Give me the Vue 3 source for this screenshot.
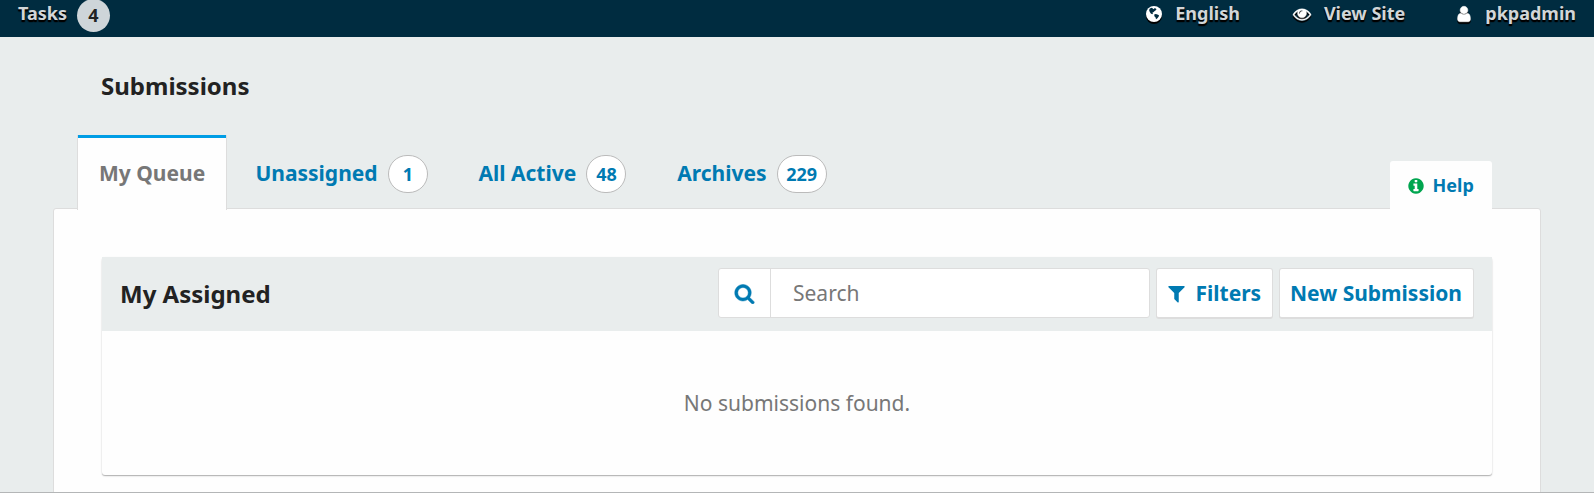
<script setup>
const tabs = [
  { label: 'My Queue', active: true },
  { label: 'Unassigned', count: 1 },
  { label: 'All Active', count: 48 },
  { label: 'Archives', count: 229 },
]
</script>

<template>
  <div class="page">
    <header class="topbar">
      <a class="tasks">Tasks</a>
      <span class="tasks-count">4</span>
      <nav class="user-nav">
        <a class="nav-item language">
          <svg viewBox="0 0 18 18">
            <circle cx="9" cy="9" r="8" fill="#fff" />
            <path d="M4.4 4L6.2 2.8 7.6 3.2 8.4 4.2 9.4 3.2 11 3.6 11.4 4.8 10.4 5.6 9.4 6.2 8.4 7.2 7.4 7.6 8 8.6 7.2 9.2 5.8 8.4 4.8 7 4.2 5.6z" fill="#002c40" />
            <path d="M9.2 9.6L10.8 9 12.4 9.4 14 10.2 13.6 11.8 12.4 13.2 11 14.2 10.6 12.4 9.4 11.2z" fill="#002c40" />
          </svg>
          <span>English</span>
        </a>
        <a class="nav-item view-site">
          <svg viewBox="0 0 1792 1792"><path fill="#fff" stroke="#fff" stroke-width="40" d="M1664 960q-152-236-381-353 61 104 61 225 0 185-131.5 316.5t-316.5 131.5-316.5-131.5-131.5-316.5q0-121 61-225-229 117-381 353 133 205 333.5 326.5t434.5 121.5 434.5-121.5 333.5-326.5zm-720-384q0-20-14-34t-34-14q-125 0-214.5 89.5t-89.5 214.5q0 20 14 34t34 14 34-14 14-34q0-86 61-147t147-61q20 0 34-14t14-34zm848 384q0 34-20 69-140 230-376.5 368.5t-499.5 138.5-499.5-139-376.5-368q-20-35-20-69t20-69q140-229 376.5-368t499.5-139 499.5 139 376.5 368q20 35 20 69z" /></svg>
          <span>View Site</span>
        </a>
        <a class="nav-item account">
          <svg viewBox="0 0 1792 1792"><path fill="#fff" stroke="#fff" stroke-width="50" d="M1536 1399q0 109-62.5 187t-150.5 78h-854q-88 0-150.5-78t-62.5-187q0-85 8.5-160.5t31.5-152 58.5-131 94-89 134.5-34.5q131 128 313 128t313-128q76 0 134.5 34.5t94 89 58.5 131 31.5 152 8.5 160.5zm-256-887q0 159-112.5 271.5t-271.5 112.5-271.5-112.5-112.5-271.5 112.5-271.5 271.5-112.5 271.5 112.5 112.5 271.5z" /></svg>
          <span>pkpadmin</span>
        </a>
      </nav>
    </header>

    <h1 class="title">Submissions</h1>

    <div class="tab-row">
      <a v-for="tab in tabs" :key="tab.label" class="tab" :class="{ active: tab.active }">
        {{ tab.label }}<span v-if="tab.count" class="count">{{ tab.count }}</span>
      </a>
      <a class="help">
        <svg viewBox="0 0 1792 1792"><path fill="#00a54f" d="M1152 1376v-160q0-14-9-23t-23-9h-96v-512q0-14-9-23t-23-9h-320q-14 0-23 9t-9 23v160q0 14 9 23t23 9h96v320h-96q-14 0-23 9t-9 23v160q0 14 9 23t23 9h448q14 0 23-9t9-23zm-128-896v-160q0-14-9-23t-23-9h-192q-14 0-23 9t-9 23v160q0 14 9 23t23 9h192q14 0 23-9t9-23zm640 416q0 209-103 385.5t-279.5 279.5-385.5 103-385.5-103-279.5-279.5-103-385.5 103-385.5 279.5-279.5 385.5-103 385.5 103 279.5 279.5 103 385.5z" /></svg>
        Help
      </a>
    </div>

    <main class="panel">
      <section class="list">
        <div class="list-head">
          <h2>My Assigned</h2>
          <div class="search">
            <span class="search-icon">
              <svg viewBox="0 0 1792 1792"><path fill="#007ab2" stroke="#007ab2" stroke-width="40" d="M1216 832q0-185-131.5-316.5t-316.5-131.5-316.5 131.5-131.5 316.5 131.5 316.5 316.5 131.5 316.5-131.5 131.5-316.5zm512 832q0 52-38 90t-90 38q-54 0-90-38l-343-342q-179 124-399 124-143 0-273.5-55.5t-225-150-150-225-55.5-273.5 55.5-273.5 150-225 225-150 273.5-55.5 273.5 55.5 225 150 150 225 55.5 273.5q0 220-124 399l343 343q37 37 37 90z" /></svg>
            </span>
            <span class="search-field">Search</span>
          </div>
          <button class="btn filters">
            <svg viewBox="0 0 1792 1792"><path fill="#007ab2" d="M1595 295q17 41-14 70l-493 493v742q0 42-39 59-13 5-25 5-27 0-45-19l-256-256q-19-19-19-45v-486l-493-493q-31-29-14-70 17-39 59-39h1280q42 0 59 39z" /></svg>
            <span>Filters</span>
          </button>
          <button class="btn new">New Submission</button>
        </div>
        <p class="empty">No submissions found.</p>
      </section>
    </main>
  </div>
</template>

<style>
body { background: #e9eded; }
</style>

<style scoped>
.page {
  box-sizing: border-box;
  width: 1594px;
  height: 493px;
  overflow: hidden;
  display: flex;
  flex-direction: column;
  background: #e9eded;
  border-bottom: 1px solid #b4b6b7;
  font-family: "Noto Sans", sans-serif;
  font-size: 21px;
  color: #222;
}
.topbar {
  flex: none;
  height: 37px;
  display: flex;
  align-items: flex-start;
  background: #002c40;
  font-size: 18px;
  font-weight: 700;
  line-height: 27px;
  color: #d2d6d8;
}
.tasks {
  width: 59px;
  padding-left: 18px;
  text-shadow: 0 2px 1px #000, 0 2px 1px #000;
}
.tasks-count {
  width: 33px;
  height: 33px;
  margin-top: -1px;
  border-radius: 50%;
  background: #ced5d9;
  color: #222;
  line-height: 33px;
  text-align: center;
}
.user-nav { display: flex; margin-left: auto; padding-right: 18px; }
.nav-item { display: flex; text-shadow: 0 2px 1px #000, 0 2px 1px #000; }
.view-site { margin-left: 53px; }
.account { margin-left: 50px; }
.nav-item svg {
  width: 18px;
  height: 18px;
  margin: 5px 12px 0 0;
  overflow: visible;
  filter: drop-shadow(0 2px 0.5px #000);
}
.nav-item.view-site svg { margin-right: 13px; }
.title {
  flex: none;
  margin: 31px 0 0 101px;
  font-size: 24px;
  line-height: 36px;
  height: 67px;
}
.tab-row {
  flex: none;
  position: relative;
  z-index: 1;
  height: 75px;
  margin: 0 102px 0 77px;
  display: flex;
}
.tab {
  height: 75px;
  display: flex;
  font-weight: 700;
  line-height: 76px;
  color: #007ab2;
  white-space: nowrap;
  padding: 0 22.3px 0 28.4px;
}
.tab.active {
  box-sizing: border-box;
  width: 150px;
  padding: 0 0 0 21px;
  border: solid #ddd;
  border-width: 0 1px;
  background: linear-gradient(#009de5 3px, #fefefe 3px);
  color: #777;
}
.count {
  box-sizing: border-box;
  height: 38px;
  min-width: 40px;
  margin: 20px 0 0 10.2px;
  padding: 0 8.5px;
  border: 1px solid #bbb;
  border-radius: 19px;
  background: #fff;
  font-size: 18px;
  line-height: 36px;
  text-align: center;
}
.help {
  box-sizing: border-box;
  align-self: flex-end;
  display: flex;
  align-items: center;
  width: 102px;
  height: 49px;
  margin-left: auto;
  padding-left: 17px;
  border-radius: 3px 3px 0 0;
  background: #fefefe;
  color: #007ab2;
  font-size: 18px;
  font-weight: 700;
  line-height: 49px;
}
.help svg { width: 18px; height: 18px; margin-right: 7.5px; }
.panel {
  box-sizing: border-box;
  flex: none;
  width: 1488px;
  height: 320px;
  margin: -2px 0 0 53px;
  padding: 48px 47px 0;
  border: 1px solid #ddd;
  border-radius: 3px;
  background: #fefefe;
}
.list {
  height: 218px;
  margin: 0 1px;
  border-radius: 3px;
  background: #fefefe;
  box-shadow: 0 1px 1px rgba(0, 0, 0, 0.2), 0 1px 2px rgba(0, 0, 0, 0.15);
}
.list-head {
  box-sizing: border-box;
  height: 74px;
  display: flex;
  padding: 11px 18px 0 18px;
  background: #e9eded;
}
.list-head h2 { margin: 0; font-size: 24px; line-height: 51px; }
.search {
  box-sizing: border-box;
  display: flex;
  width: 432px;
  height: 50px;
  margin-left: auto;
  border: 1px solid #ddd;
  border-radius: 3px;
  background: #fff;
}
.search-icon {
  box-sizing: border-box;
  width: 52px;
  padding: 14px 0 0 14.5px;
  border-right: 1px solid #ddd;
}
.search-icon svg { display: block; width: 21px; height: 21px; }
.search-field { padding-left: 22px; line-height: 48px; color: #777; }
.btn {
  box-sizing: border-box;
  display: flex;
  height: 51px;
  margin: 0 0 0 6px;
  padding: 0 0 0 10px;
  border: 1px solid #ddd;
  border-bottom-width: 2px;
  border-radius: 3px;
  background: #fff;
  color: #007ab2;
  font: 700 21px/48px "Noto Sans", sans-serif;
  white-space: nowrap;
}
.filters { width: 117px; padding-left: 9px; }
.filters svg { width: 21px; height: 21px; margin: 14px 8.5px 0 0; }
.new { width: 195px; }
.empty { margin: 0; text-align: center; line-height: 144px; color: #777; }
</style>
